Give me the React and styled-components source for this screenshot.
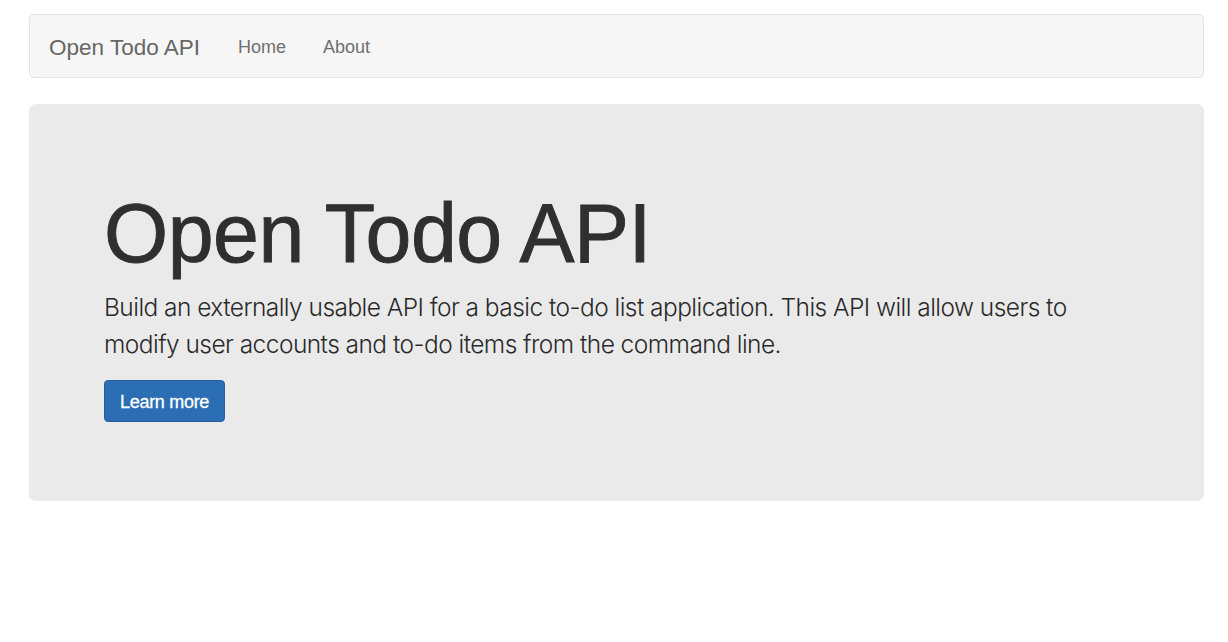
import React from "react";
import styled, { createGlobalStyle } from "styled-components";

const Global = createGlobalStyle`
  html, body { margin: 0; padding: 0; background: #fff; }
  body { font-family: "Liberation Sans", Arial, sans-serif; color: #333; }
`;

const Page = styled.div`
  width: 1175px;
  margin: 0 0 0 29px;
  padding-top: 14px;
  display: flex;
  flex-direction: column;
  gap: 26px;
`;

const Navbar = styled.nav`
  box-sizing: border-box;
  height: 64px;
  background: #f6f6f6;
  border: 1px solid #e4e4e4;
  border-radius: 5px;
  display: flex;
  align-items: center;
  padding: 3px 0 0 19px;
`;

const Brand = styled.a`
  font-size: 22.5px;
  color: #666;
  text-decoration: none;
  margin-right: 38px;
`;

const NavLink = styled.a`
  font-size: 18px;
  color: #6f6f6f;
  text-decoration: none;
  margin-right: 37px;
`;

const Jumbotron = styled.section`
  box-sizing: border-box;
  height: 397px;
  background: #eaeaea;
  border-radius: 7px;
  padding: 84px 75px 0;
  display: flex;
  flex-direction: column;
  align-items: flex-start;
`;

const Title = styled.h1`
  margin: 0;
  font-size: 82.5px;
  line-height: 91px;
  font-weight: 400;
  color: #2f2f2f;
  letter-spacing: -0.5px;
  -webkit-text-stroke: 0.9px #2f2f2f;
`;

const Lead = styled.p`
  margin: 10px 0 0;
  font-family: Inter, "Liberation Sans", Arial, sans-serif;
  font-size: 24.5px;
  line-height: 37px;
  font-weight: 300;
  letter-spacing: -0.55px;
  color: #2a2a2a;
  max-width: 1000px;
`;

const Button = styled.a`
  box-sizing: border-box;
  margin-top: 17px;
  height: 42px;
  padding: 2px 15px 0;
  display: inline-flex;
  align-items: center;
  background: #2b6eb3;
  border: 1px solid #285f9c;
  border-radius: 4px;
  color: #fff;
  font-size: 18px;
  text-decoration: none;
  letter-spacing: -0.3px;
  -webkit-text-stroke: 0.3px #fff;
`;

export default function App() {
  return (
    <>
      <Global />
      <Page>
        <Navbar>
          <Brand href="#">Open Todo API</Brand>
          <NavLink href="#">Home</NavLink>
          <NavLink href="#">About</NavLink>
        </Navbar>
        <Jumbotron>
          <Title>Open Todo API</Title>
          <Lead>
            Build an externally usable API for a basic to-do list application. This API will allow users to
            modify user accounts and to-do items from the command line.
          </Lead>
          <Button href="#">Learn more</Button>
        </Jumbotron>
      </Page>
    </>
  );
}
